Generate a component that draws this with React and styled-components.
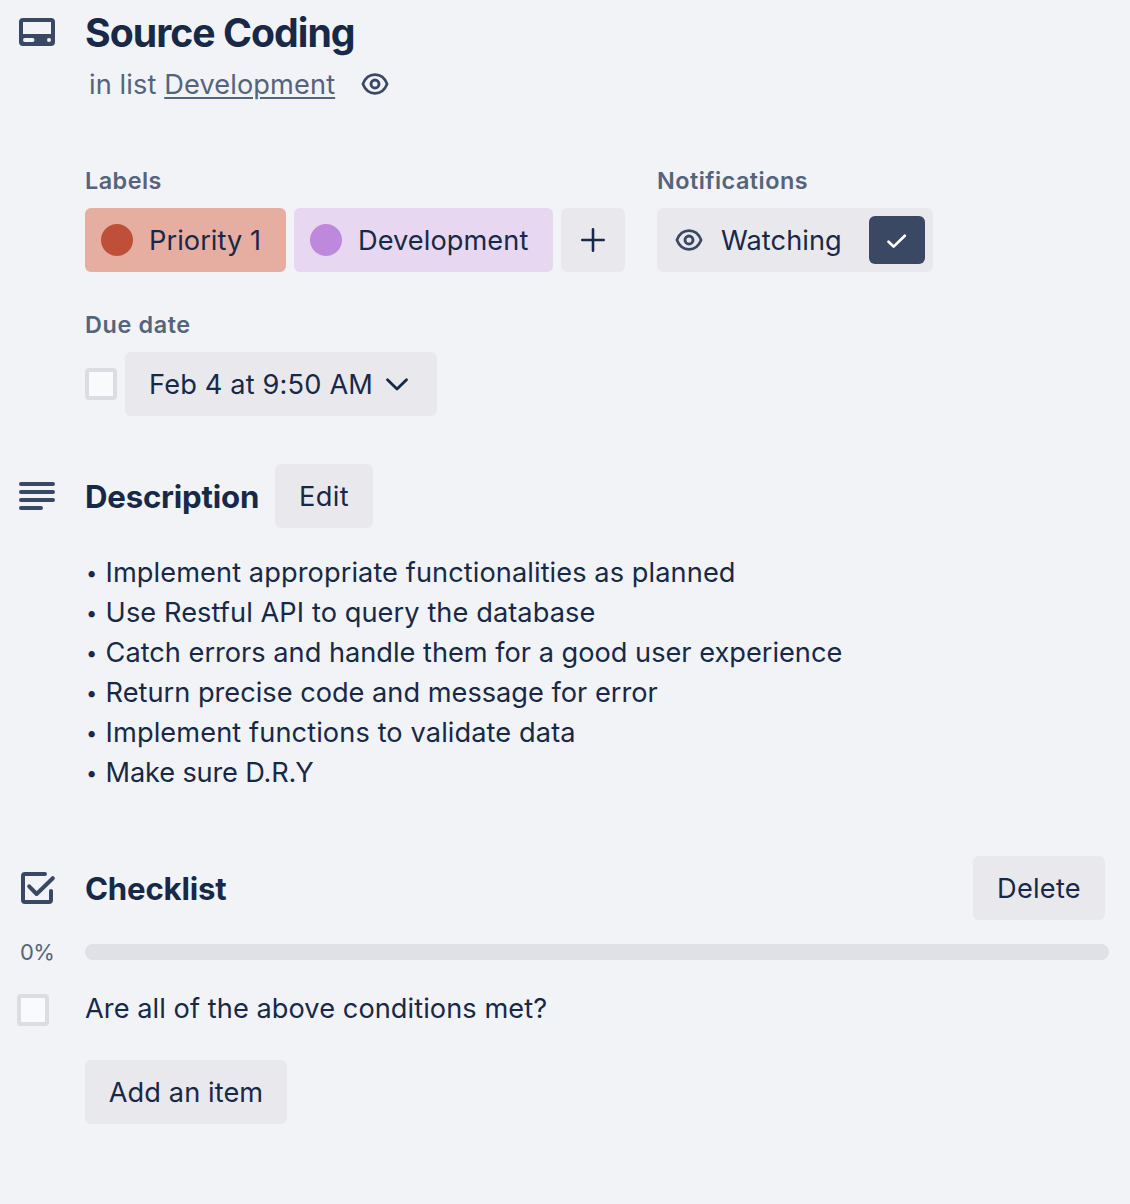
import React from 'react';
import styled, { createGlobalStyle } from 'styled-components';

const MUTED = '#56637c';
const ICON = '#3b4863';
const BUTTON = '#e9e8ed';

const GlobalStyle = createGlobalStyle`
  * { box-sizing: border-box; }
  body {
    margin: 0;
    background: #f1f3f7;
    color: #182947;
    font-family: Inter, Roboto, "Liberation Sans", sans-serif;
    -webkit-font-smoothing: antialiased;
  }
`;

const Page = styled.main`
  width: 1130px;
  height: 1204px;
  padding: 8px 21px 0 13px;
  overflow: hidden;
  font-size: 27.2px;
  font-weight: 400;
  line-height: 40px;
  letter-spacing: 0.06px;
`;

const Section = styled.section`
  display: grid;
  grid-template-columns: 72px 1fr;
  align-items: ${(p) => p.$align || 'center'};
  margin-top: ${(p) => p.$top || 0}px;
`;

const IconCell = styled.div`
  display: flex;
  width: 48px;
  color: ${ICON};
  justify-content: center;
`;

const Svg = styled.svg`
  display: block;
  flex: none;
  fill: none;
  stroke: currentColor;
  stroke-linecap: round;
  stroke-linejoin: round;
`;

const Caption = styled.span`
  padding-top: 2px;
`;

const Title = styled.h1`
  margin: 0;
  height: 50px;
  font-size: 39.2px;
  line-height: 50px;
  font-weight: 700;
  letter-spacing: -0.97px;
`;

const SubLine = styled.div`
  display: flex;
  align-items: center;
  height: 40px;
  margin: 6px 0 0 75px;
  padding-left: 1px;
  color: ${MUTED};
  letter-spacing: 0.11px;
  white-space: pre;
`;

const ListLink = styled.span`
  text-decoration: underline;
  text-decoration-thickness: 2px;
  text-underline-offset: 3px;
`;

const WatchMark = styled.span`
  display: flex;
  margin-left: 26px;
  color: ${ICON};
`;

const Details = styled.div`
  display: flex;
  flex-wrap: wrap;
  column-gap: 32px;
  row-gap: 32px;
  margin: 56px 0 0 72px;
`;

const Field = styled.div`
  flex: ${(p) => (p.$wide ? '0 0 100%' : 'none')};
`;

const FieldLabel = styled.h3`
  margin: 0 0 8px;
  height: 40px;
  font-size: 23.4px;
  font-weight: 600;
  line-height: 41px;
  letter-spacing: ${(p) => p.$track || 0.48}px;
  color: ${MUTED};
`;

const FieldRow = styled.div`
  display: flex;
  align-items: center;
  gap: 8px;
`;

const Chip = styled.div`
  display: flex;
  align-items: center;
  gap: 16px;
  width: ${(p) => p.$width}px;
  height: 64px;
  padding-left: 16px;
  border-radius: 6px;
  background: ${(p) => p.$tint};
  white-space: nowrap;
`;

const Dot = styled.span`
  width: 32px;
  height: 32px;
  border-radius: 50%;
  background: ${(p) => p.$color};
`;

const Button = styled.button`
  display: flex;
  align-items: center;
  justify-content: ${(p) => (p.$start ? 'flex-start' : 'center')};
  width: ${(p) => p.$width}px;
  height: 64px;
  padding: 0 ${(p) => (p.$start ? p.$start : 0)}px;
  border: 0;
  border-radius: 6px;
  background: ${BUTTON};
  color: inherit;
  font: inherit;
  letter-spacing: ${(p) => p.$track || 0.08}px;
  white-space: nowrap;
`;

const WatchLabel = styled(Caption)`
  margin-left: 18px;
  flex: 1;
  text-align: left;
`;

const WatchCheck = styled.span`
  display: flex;
  align-items: center;
  justify-content: center;
  width: 56px;
  height: 48px;
  margin-right: -10px;
  border-radius: 6px;
  background: ${ICON};
  color: #fff;
`;

const IconTone = styled.span`
  display: flex;
  color: ${ICON};
`;

const Checkbox = styled.span`
  display: block;
  width: 32px;
  height: 32px;
  border: 4px solid #dcdde2;
  border-radius: 4px;
  background: #f9fafc;
`;

const Heading = styled.h2`
  margin: 0;
  padding-top: 2px;
  font-size: 31.2px;
  font-weight: 700;
  line-height: 62px;
  letter-spacing: -0.2px;
`;

const HeadRow = styled.div`
  display: flex;
  align-items: center;
  justify-content: ${(p) => (p.$spread ? 'space-between' : 'flex-start')};
  padding-right: ${(p) => (p.$spread ? 4 : 0)}px;
`;

const SectionName = styled.div`
  width: 190px;
`;

const Notes = styled.ul`
  margin: 25px 0 -1px 73px;
  padding: 0;
  list-style: none;
`;

const Note = styled.li`
  display: flex;
  height: 40px;
  letter-spacing: ${(p) => p.$track}px;

  &::before {
    content: '•';
    width: 19.6px;
    font-size: 20px;
    line-height: 40px;
  }
`;

const Percent = styled.span`
  margin-left: 7px;
  font-size: 22px;
  letter-spacing: -0.7px;
  color: ${MUTED};
`;

const Track = styled.div`
  width: 1024px;
  height: 16px;
  border-radius: 8px;
  background: #e0e1e6;
`;

const CheckCell = styled.div`
  padding: 6px 0 0 4px;
`;

const ItemText = styled.span`
  padding-top: 1px;
`;

const AddRow = styled.div`
  margin: 31px 0 0 72px;
`;

const Eye = () => (
  <Svg width="28" height="24" viewBox="0 0 28 24" strokeWidth="2.7">
    <path d="M1.9 12C4.2 6.1 8.4 2.7 14 2.7S23.8 6.1 26.1 12C23.8 17.9 19.6 21.3 14 21.3S4.2 17.9 1.9 12Z" />
    <circle cx="14" cy="12" r="4" strokeWidth="2.9" />
  </Svg>
);

const CardIcon = () => (
  <Svg width="48" height="48" viewBox="0 0 48 48">
    <path
      fill="currentColor"
      stroke="none"
      fillRule="evenodd"
      d="M10 10H38a4 4 0 0 1 4 4V34a4 4 0 0 1-4 4H10a4 4 0 0 1-4-4V14a4 4 0 0 1 4-4ZM10 14V26H38V14ZM12 30a2 2 0 0 0 0 4H19.500a2 2 0 0 0 0-4ZM36 30a2 2 0 0 0 0 4a2 2 0 0 0 0-4Z"
    />
  </Svg>
);

const LinesIcon = () => (
  <Svg width="48" height="48" viewBox="0 0 48 48" strokeWidth="4">
    <path d="M8 12H40M8 20H40M8 28H40M8 36H28" />
  </Svg>
);

const ChecklistIcon = () => (
  <Svg width="48" height="48" viewBox="0 0 48 48" strokeWidth="4">
    <path d="M32 10H12a2 2 0 0 0-2 2V36a2 2 0 0 0 2 2H36a2 2 0 0 0 2-2V27" />
    <path d="M16.200 22.300L23.600 30L39.800 14.200" />
  </Svg>
);

const notes = [
  ['Implement appropriate functionalities as planned', 0.08],
  ['Use Restful API to query the database', 0.08],
  ['Catch errors and handle them for a good user experience', -0.008],
  ['Return precise code and message for error', 0],
  ['Implement functions to validate data', 0.1],
  ['Make sure D.R.Y', -0.17],
];

export default function App() {
  return (
    <Page>
      <GlobalStyle />
      <Section $align="start">
        <IconCell><CardIcon /></IconCell>
        <Title>Source Coding</Title>
      </Section>
      <SubLine>
        <Caption>{'in list '}</Caption>
        <Caption><ListLink>Development</ListLink></Caption>
        <WatchMark><Eye /></WatchMark>
      </SubLine>

      <Details>
        <Field>
          <FieldLabel>Labels</FieldLabel>
          <FieldRow>
            <Chip $width={201} $tint="#e6ada1">
              <Dot $color="#be4f39" />
              <Caption>Priority 1</Caption>
            </Chip>
            <Chip $width={259} $tint="#e7d7f0">
              <Dot $color="#be88dc" />
              <Caption>Development</Caption>
            </Chip>
            <Button $width={64} aria-label="Add label">
              <Svg width="26" height="26" viewBox="0 0 26 26" strokeWidth="2.6">
                <path d="M2.300 13H23.700M13 2.300V23.700" />
              </Svg>
            </Button>
          </FieldRow>
        </Field>
        <Field>
          <FieldLabel>Notifications</FieldLabel>
          <Button $width={276} $start={18}>
            <IconTone><Eye /></IconTone>
            <WatchLabel>Watching</WatchLabel>
            <WatchCheck>
              <Svg width="24" height="24" viewBox="0 0 24 24" strokeWidth="2.700">
                <path d="M3.500 13.800L8.600 18.600L19.800 7.800" />
              </Svg>
            </WatchCheck>
          </Button>
        </Field>
        <Field $wide>
          <FieldLabel $track={0.62}>Due date</FieldLabel>
          <FieldRow>
            <Checkbox />
            <Button $width={312} $start={24} $track={0.16}>
              <Caption>Feb 4 at 9:50 AM</Caption>
              <Svg width="48" height="48" viewBox="0 0 48 48" strokeWidth="2.8">
                <path d="M14.500 19.700L24 29L33.500 19.700" />
              </Svg>
            </Button>
          </FieldRow>
        </Field>
      </Details>

      <Section $top={48}>
        <IconCell><LinesIcon /></IconCell>
        <HeadRow>
          <SectionName><Heading>Description</Heading></SectionName>
          <Button $width={98} $track={0.35}><Caption>Edit</Caption></Button>
        </HeadRow>
      </Section>
      <Notes>
        {notes.map(([text, track]) => (
          <Note key={text} $track={track}>{text}</Note>
        ))}
      </Notes>

      <Section $top={64}>
        <IconCell><ChecklistIcon /></IconCell>
        <HeadRow $spread>
          <Heading>Checklist</Heading>
          <Button $width={132} $track={0.25}><Caption>Delete</Caption></Button>
        </HeadRow>
      </Section>
      <Section $top={12}>
        <Percent>0%</Percent>
        <Track />
      </Section>
      <Section $top={16} $align="start">
        <CheckCell><Checkbox /></CheckCell>
        <ItemText>
          Are all of the above conditions met?
        </ItemText>
      </Section>
      <AddRow>
        <Button $width={202}><Caption>Add an item</Caption></Button>
      </AddRow>
    </Page>
  );
}
